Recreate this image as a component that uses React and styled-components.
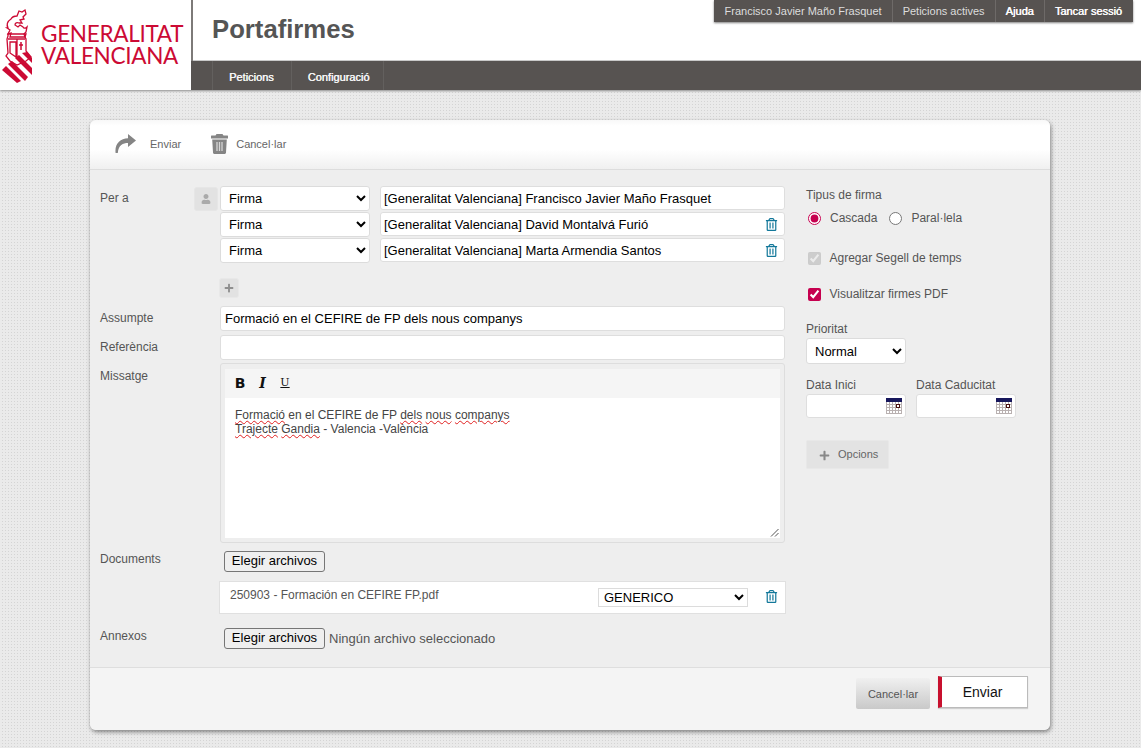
import React from 'react';
import styled, { createGlobalStyle } from 'styled-components';
import { FaRegTrashAlt, FaUser, FaPlus } from 'react-icons/fa';

const Global = createGlobalStyle`
  html, body { margin: 0; padding: 0; }
  body {
    font-family: "Liberation Sans", Arial, sans-serif;
    color: #555;
    background-color: #eaeaea;
    background-image:
      linear-gradient(90deg, #eaeaea 2px, transparent 2px),
      linear-gradient(#eaeaea 2px, #d4d4d4 2px);
    background-size: 3px 3px;
  }
`;

const Page = styled.div`
  height: 748px;
  overflow: hidden;
  display: flex;
  flex-direction: column;
`;

const Header = styled.header`
  display: flex;
  height: 90px;
  flex: none;
  background: #fff;
  box-shadow: 0 1px 2px rgba(0, 0, 0, 0.4);
`;

const LogoBox = styled.div`
  width: 191px;
  flex: none;
  display: flex;
  align-items: flex-start;
  background: #fff;
  padding: 8px 0 0 2px;
  box-sizing: border-box;
`;

const LogoText = styled.div`
  margin: 14.5px 0 0 8px;
  color: #cc0a34;
  font-family: "Lato", sans-serif;
  font-size: 22.5px;
  line-height: 22px;
  letter-spacing: -0.3px;
  white-space: nowrap;
`;

const HeadMain = styled.div`
  flex: 1;
  display: flex;
  flex-direction: column;
  border-left: 2px solid #7d7a78;
  box-sizing: border-box;
`;

const TitleRow = styled.div`
  height: 61px;
  flex: none;
  display: flex;
  justify-content: space-between;
  align-items: flex-start;
  padding: 0 8px 0 19px;
  box-sizing: border-box;
  border-bottom: 1px solid #c9c9c9;
`;

const Title = styled.h1`
  margin: 15px 0 0;
  font-size: 25.7px;
  line-height: 29px;
  font-weight: bold;
  color: #555;
`;

const TopMenu = styled.nav`
  display: flex;
  height: 22px;
  padding: 0 1px;
  background: #575351;
  box-shadow: 0 1px 2px rgba(0, 0, 0, 0.5);
`;

const TopItem = styled.a`
  padding: 0 10px;
  font-size: 11px;
  line-height: 22px;
  color: ${p => (p.$strong ? '#fff' : '#ddd')};
  text-shadow: ${p => (p.$strong ? '0.4px 0 0 #fff' : 'none')};
  border-left: ${p => (p.$first ? 'none' : '1px solid #6e6a68')};
  white-space: nowrap;
`;

const MainNav = styled.nav`
  height: 29px;
  flex: none;
  margin-left: -2px;
  padding-left: 21px;
  background: #575351;
  display: flex;
`;

const NavItem = styled.a`
  padding: 0 17px 0 16px;
  line-height: 32px;
  font-size: 11px;
  color: #f6f6f6;
  text-shadow: 0.4px 0 0 #f6f6f6;
  border-left: 1px solid #63605e;
  &:last-child {
    padding-right: 14px;
    border-right: 1px solid #63605e;
  }
`;

const Card = styled.main`
  width: 960px;
  height: 610px;
  margin: 30px 0 0 90px;
  border-radius: 6px;
  box-shadow: 1px 2px 4px rgba(0, 0, 0, 0.45);
  display: flex;
  flex-direction: column;
  overflow: hidden;
  background: #eee;
`;

const Toolbar = styled.div`
  height: 50px;
  flex: none;
  box-sizing: border-box;
  display: flex;
  align-items: center;
  padding: 0 0 2px 25px;
  gap: 30px;
  background: linear-gradient(#f8f8f8 0, #fff 12%, #fff 60%, #f0f0f0 100%);
  border-bottom: 1px solid #ddd;
`;

const ToolAction = styled.a`
  display: flex;
  align-items: center;
  gap: ${p => p.$gap}px;
  font-size: 11px;
  color: #666;
`;

const Body = styled.div`
  flex: 1;
  display: grid;
  grid-template-columns: 696px 1fr;
  padding: 16px 0 0 10px;
  background: #eee;
`;

const FormCol = styled.div`
  display: flex;
  flex-direction: column;
`;

const Row = styled.div`
  display: grid;
  grid-template-columns: 120px 565px;
  margin-top: ${p => p.$mt || 0}px;
`;

const LabelCell = styled.div`
  display: flex;
  justify-content: space-between;
  align-items: flex-start;
  padding-right: 2px;
`;

const Label = styled.label`
  font-size: 12px;
  line-height: 14px;
  color: #555;
  padding-top: ${p => (p.$pt === undefined ? 5 : p.$pt)}px;
  display: block;
`;

const PersonBtn = styled.span`
  width: 24px;
  height: 24px;
  margin-top: 1px;
  border-radius: 3px;
  background: #e2e2e2;
  border: 1px solid #e6e6e6;
  box-sizing: border-box;
  display: flex;
  align-items: center;
  justify-content: center;
  color: #aaa;
  font-size: 10px;
`;

const Recipients = styled.div`
  display: flex;
  flex-direction: column;
  gap: 1px;
`;

const Recipient = styled.div`
  display: grid;
  grid-template-columns: 150px 405px;
  column-gap: 10px;
  align-items: start;
  position: relative;
`;

const Select = styled.select`
  width: ${p => p.$w || '100%'};
  height: ${p => p.$h || 25}px;
  margin-top: ${p => p.$mt || 0}px;
  box-sizing: border-box;
  border: 1px solid #dcdcdc;
  border-radius: ${p => (p.$square ? 0 : 3)}px;
  background: #fff;
  color: #000;
  font-family: "Liberation Sans", Arial, sans-serif;
  font-size: 13px;
  padding-left: ${p => (p.$pad === undefined ? 4 : p.$pad)}px;
`;

const TextInput = styled.input`
  width: 100%;
  height: 24px;
  box-sizing: border-box;
  border: 1px solid #dedede;
  border-radius: 3px;
  background: #fff;
  color: #000;
  font-family: "Liberation Sans", Arial, sans-serif;
  font-size: 13px;
  padding: 0 3px;
  outline: none;
`;

const SubjectInput = styled(TextInput)`
  height: 25px;
  padding: 0 4px;
`;

const TrashBtn = styled.span`
  position: absolute;
  right: ${p => p.$right || 7}px;
  top: ${p => p.$top || 6}px;
  color: #13789a;
  font-size: 13px;
  line-height: 13px;
  display: block;
`;

const AddBtn = styled.span`
  width: 20px;
  height: 20px;
  margin: 15px 0 8px -1px;
  border-radius: 3px;
  background: #e2e2e2;
  border: 1px solid #e8e8e8;
  box-sizing: border-box;
  display: flex;
  align-items: center;
  justify-content: center;
  color: #8f8f8f;
  font-size: 10px;
`;

const Editor = styled.div`
  height: 180px;
  box-sizing: border-box;
  border: 1px solid #ddd;
  border-radius: 3px;
  padding: 5px 4px 4px;
  background: #eee;
  position: relative;
  display: flex;
  flex-direction: column;
`;

const EditorBar = styled.div`
  height: 29px;
  flex: none;
  box-sizing: border-box;
  background: #f5f5f5;
  display: flex;
  align-items: center;
  padding: 0 0 2px 9px;
  gap: 10.5px;
`;

const FormatBtn = styled.span`
  font-family: "DejaVu ${p => (p.$u || p.$i ? 'Serif' : 'Sans')}", sans-serif;
  font-size: ${p => (p.$u ? 11 : 14)}px;
  font-weight: ${p => (p.$u ? 'normal' : 'bold')};
  font-style: ${p => (p.$i ? 'italic' : 'normal')};
  text-decoration: ${p => (p.$u ? 'underline' : 'none')};
  width: 12px;
  text-align: center;
  color: #111;
`;

const EditorText = styled.div`
  flex: 1;
  background: #fff;
  padding: 10px;
  font-size: 12px;
  line-height: 14px;
  color: #444;
`;

const Typo = styled.span`
  text-decoration: underline wavy #e02020 1.2px;
  text-underline-offset: 1px;
`;

const Resizer = styled.svg`
  position: absolute;
  right: 5px;
  bottom: 5px;
`;

const FileBtn = styled.button`
  height: 21px;
  width: 101px;
  padding: 0 0 1px;
  box-sizing: border-box;
  border: 1px solid #767676;
  border-radius: 3px;
  background: #efefef;
  color: #000;
  font-family: "Liberation Sans", Arial, sans-serif;
  font-size: 13px;
  line-height: 18px;
  margin-left: 4px;
`;

const FileLine = styled.div`
  display: flex;
  align-items: center;
  gap: 4px;
  font-size: 13px;
  color: #555;
`;

const FileRow = styled.div`
  position: relative;
  height: 33px;
  margin-left: -1px;
  width: 567px;
  box-sizing: border-box;
  background: #fff;
  border: 1px solid #e0e0e0;
  display: flex;
  justify-content: space-between;
  padding: 6px 37px 0 10px;
  font-size: 12px;
  color: #555;
  line-height: 14px;
`;

const Side = styled.aside`
  padding: 2px 0 0 10px;
  display: flex;
  flex-direction: column;
  align-items: flex-start;
`;

const SideLabel = styled.div`
  font-size: 12px;
  line-height: 14px;
  color: #555;
  margin-top: ${p => p.$mt || 0}px;
`;

const RadioRow = styled.div`
  display: flex;
  align-items: center;
  margin-top: 8px;
  font-size: 12px;
  color: #555;
  height: 16px;
`;

const Radio = styled.input.attrs({ type: 'radio' })`
  margin: 0 9px 0 2px;
  width: 13px;
  height: 13px;
  accent-color: #c6004f;
`;

const RadioText = styled.span`
  margin-right: 10px;
`;

const CheckRow = styled.div`
  display: flex;
  align-items: center;
  margin-top: ${p => p.$mt}px;
  font-size: 12px;
  color: #555;
  height: 16px;
`;

const Check = styled.input.attrs({ type: 'checkbox' })`
  margin: 0 8.5px 0 2px;
  width: 13px;
  height: 13px;
  accent-color: #c6004f;
`;

const Dates = styled.div`
  display: flex;
  gap: 10px;
  margin-top: 14px;
`;

const DateField = styled.div`
  width: 100px;
`;

const DateBox = styled.div`
  height: 24px;
  margin-top: 2px;
  box-sizing: border-box;
  border: 1px solid #dedede;
  border-radius: 3px;
  background: #fff;
  display: flex;
  justify-content: flex-end;
  align-items: center;
  padding-right: 3px;
`;

const Options = styled.a`
  margin-top: 22px;
  width: 83px;
  height: 29px;
  box-sizing: border-box;
  background: #e3e3e3;
  border: 1px solid #e8e8e8;
  border-radius: 2px;
  display: flex;
  align-items: center;
  gap: 8px;
  padding: 0 0 2px 12px;
  font-size: 11px;
  color: #666;
`;

const OptionPlus = styled.span`
  color: #888;
  font-size: 11px;
  display: flex;
  padding-top: 3px;
`;

const Footer = styled.footer`
  height: 63px;
  flex: none;
  box-sizing: border-box;
  background: #f4f4f4;
  border-top: 1px solid #dedede;
  display: flex;
  justify-content: flex-end;
  align-items: flex-start;
  padding: 8px 22px 0 0;
  gap: 8px;
`;

const CancelBtn = styled.button`
  width: 74px;
  height: 31px;
  margin-top: 2px;
  border: none;
  border-radius: 2px;
  background: linear-gradient(#f0f0f0, #c9c9c9);
  font-family: "Liberation Sans", Arial, sans-serif;
  font-size: 11px;
  color: #555;
  padding: 0;
`;

const SendBtn = styled.button`
  width: 90px;
  height: 32px;
  box-sizing: border-box;
  border: 1px solid #bbb;
  border-left: 4px solid #c8102e;
  background: #fff;
  font-family: "Liberation Sans", Arial, sans-serif;
  font-size: 14px;
  color: #111;
  padding: 0 4px 0 0;
  box-shadow: 0 1px 1px rgba(0, 0, 0, 0.15);
`;

const Shield = () => (
  <svg width="31" height="75" viewBox="0 0 31 75" fill="none">
    <g stroke="#cc0a34" strokeWidth="1.3" fill="none">
      <path d="M6 20c-2-4 0-7 3-9 1-2 4-3 6-3l2-5 3 1 3-2 1 4-3 3 1 2-4 1 2 3-3 0c-2-1-4 0-4 2l3 2 2-2 3 2c1 2 3 1 4 0l-1 5-2 2 1 3H8l1-4-3 1 2-4-3-2z" />
      <path d="M6 26h18l-1 3 1 2 0 12 5 6-5 4-9 4-7-4-4-5 2-3-1-14 1-3z" />
      <path d="M6 31h17M15 31v20M8 34h6v15l-6-4z" />
      <path d="M19 34v8M17 37h4" strokeWidth="1.5" />
    </g>
    <g fill="#cc0a34">
      <path d="M0 62 L4 58 L19 73 L15 75 Z" />
      <path d="M6 56 L10 53 L26 69 L23 73 Z" />
      <path d="M13 50 L17 47 L30 60 L30 67 Z" />
      <path d="M20 45 L25 44 L30 50 L30 55 Z" />
    </g>
  </svg>
);

const ArrowIcon = () => (
  <svg width="21" height="19" viewBox="0 0 21 19">
    <path fill="#858585" d="M13 0l8 6.500-8 6.500V9C8 9 3.500 11 2.800 19H.6C-.6 10 5 4.500 13 4.200z" />
  </svg>
);

const BigTrash = () => (
  <svg width="17" height="20" viewBox="0 0 17 20">
    <path fill="#858585" d="M5.500 0h6l1 1.500h4a.5.5 0 0 1 .5.5v2.500H0V2a.5.5 0 0 1 .5-.5h4z" />
    <path fill="#858585" d="M1.200 5.500h14.600l-.8 13c0 .8-.7 1.500-1.500 1.500H3.500c-.8 0-1.500-.7-1.500-1.500z" />
    <path stroke="#d6d6d6" strokeWidth="1.300" d="M6 8v9M8.500 8v9M11 8v9" />
  </svg>
);

const Calendar = () => (
  <svg width="16" height="16" viewBox="0 0 16 16">
    <rect width="16" height="16" fill="#fff" />
    <rect width="16" height="4" fill="#17175c" />
    <path stroke="#b9b1b1" strokeWidth="1" d="M.5 4v12M3.500 4v12M6.500 4v12M9.500 4v12M12.500 4v12M15.500 4v12M0 6.500h16M0 9.500h16M0 12.500h16M0 15.500h16" />
    <rect x="10.500" y="6.500" width="3" height="3" fill="#fff" stroke="#4a1010" />
  </svg>
);

const Recipients3 = [
  ['[Generalitat Valenciana] Francisco Javier Maño Frasquet', false],
  ['[Generalitat Valenciana] David Montalvá Furió', true],
  ['[Generalitat Valenciana] Marta Armendia Santos', true],
];

export default function App() {
  return (
    <Page>
      <Global />
      <Header>
        <LogoBox>
          <Shield />
          <LogoText>GENERALITAT<br />VALENCIANA</LogoText>
        </LogoBox>
        <HeadMain>
          <TitleRow>
            <Title>Portafirmes</Title>
            <TopMenu>
              <TopItem $first>Francisco Javier Maño Frasquet</TopItem>
              <TopItem>Peticions actives</TopItem>
              <TopItem $strong>Ajuda</TopItem>
              <TopItem $strong>Tancar sessió</TopItem>
            </TopMenu>
          </TitleRow>
          <MainNav>
            <NavItem>Peticions</NavItem>
            <NavItem>Configuració</NavItem>
          </MainNav>
        </HeadMain>
      </Header>

      <Card>
        <Toolbar>
          <ToolAction $gap={14}><ArrowIcon />Enviar</ToolAction>
          <ToolAction $gap={8}><BigTrash />Cancel·lar</ToolAction>
        </Toolbar>
        <Body>
          <FormCol>
            <Row>
              <LabelCell>
                <Label>Per a</Label>
                <PersonBtn><FaUser /></PersonBtn>
              </LabelCell>
              <Recipients>
                {Recipients3.map(([name, del]) => (
                  <Recipient key={name}>
                    <Select defaultValue="Firma"><option>Firma</option></Select>
                    <TextInput defaultValue={name} readOnly />
                    {del && <TrashBtn><FaRegTrashAlt /></TrashBtn>}
                  </Recipient>
                ))}
              </Recipients>
            </Row>
            <Row>
              <span />
              <AddBtn><FaPlus /></AddBtn>
            </Row>
            <Row>
              <Label>Assumpte</Label>
              <SubjectInput defaultValue="Formació en el CEFIRE de FP dels nous companys" readOnly />
            </Row>
            <Row $mt={4}>
              <Label>Referència</Label>
              <SubjectInput readOnly />
            </Row>
            <Row $mt={3}>
              <Label $pt={6}>Missatge</Label>
              <Editor>
                <EditorBar>
                  <FormatBtn>B</FormatBtn>
                  <FormatBtn $i>I</FormatBtn>
                  <FormatBtn $u>U</FormatBtn>
                </EditorBar>
                <EditorText>
                  <Typo>Formació</Typo> en el CEFIRE de FP <Typo>dels</Typo> <Typo>nous</Typo> <Typo>companys</Typo>
                  <br />
                  <Typo>Trajecte</Typo> <Typo>Gandia</Typo> - Valencia -València
                </EditorText>
                <Resizer width="9" height="9" viewBox="0 0 9 9">
                  <path d="M1 8.500L8.500 1M5 8.500L8.500 5" stroke="#555" strokeWidth="1" />
                </Resizer>
              </Editor>
            </Row>
            <Row $mt={8}>
              <Label $pt={1}>Documents</Label>
              <div><FileBtn>Elegir archivos</FileBtn></div>
            </Row>
            <Row $mt={9}>
              <span />
              <FileRow>
                <span>250903 - Formación en CEFIRE FP.pdf</span>
                <Select $square $pad={1} $w="150px" $h={19} defaultValue="GENERICO">
                  <option>GENERICO</option>
                </Select>
                <TrashBtn $right={7} $top={8}><FaRegTrashAlt /></TrashBtn>
              </FileRow>
            </Row>
            <Row $mt={14}>
              <Label $pt={1}>Annexos</Label>
              <FileLine><FileBtn>Elegir archivos</FileBtn>Ningún archivo seleccionado</FileLine>
            </Row>
          </FormCol>
          <Side>
            <SideLabel>Tipus de firma</SideLabel>
            <RadioRow>
              <Radio name="tipus" defaultChecked /><RadioText>Cascada</RadioText>
              <Radio name="tipus" />Paral·lela
            </RadioRow>
            <CheckRow $mt={24}><Check disabled defaultChecked />Agregar Segell de temps</CheckRow>
            <CheckRow $mt={20}><Check defaultChecked />Visualitzar firmes PDF</CheckRow>
            <SideLabel $mt={20}>Prioritat</SideLabel>
            <Select $w="100px" $h={26} $mt={2} defaultValue="Normal"><option>Normal</option></Select>
            <Dates>
              <DateField>
                <SideLabel>Data Inici</SideLabel>
                <DateBox><Calendar /></DateBox>
              </DateField>
              <DateField>
                <SideLabel>Data Caducitat</SideLabel>
                <DateBox><Calendar /></DateBox>
              </DateField>
            </Dates>
            <Options><OptionPlus><FaPlus /></OptionPlus>Opcions</Options>
          </Side>
        </Body>
        <Footer>
          <CancelBtn>Cancel·lar</CancelBtn>
          <SendBtn>Enviar</SendBtn>
        </Footer>
      </Card>
    </Page>
  );
}
